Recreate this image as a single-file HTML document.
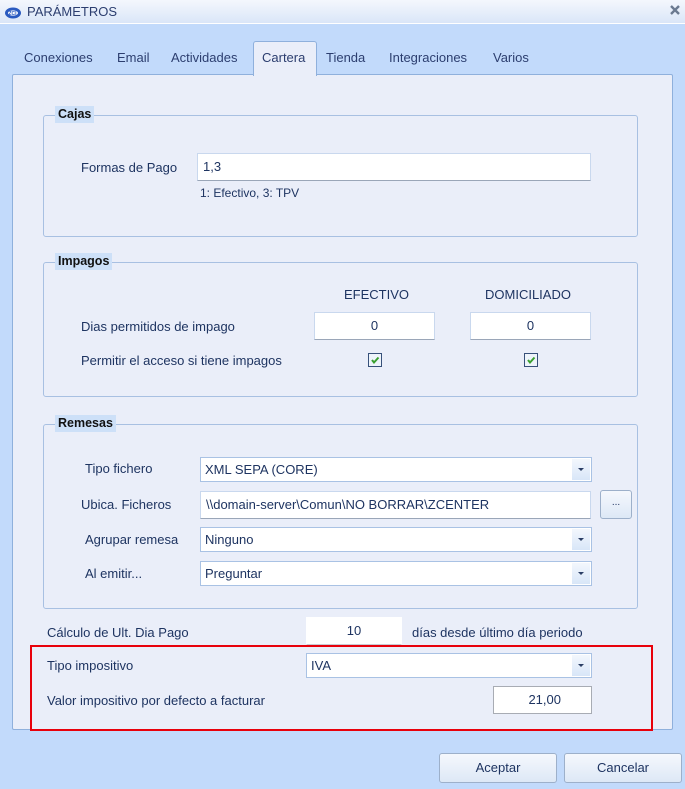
<!DOCTYPE html>
<html><head><meta charset="utf-8"><style>
*{margin:0;padding:0;box-sizing:border-box}
body{width:685px;height:789px;overflow:hidden;background:#c2dafb;font-family:"Liberation Sans",sans-serif;font-size:13px;color:#1e3461;position:relative}
.a{position:absolute;white-space:nowrap}
.title{left:0;top:0;width:685px;height:24px;background:linear-gradient(#f4f7fd,#dae6f8);border-bottom:1px solid #fff}
.panel{left:12px;top:74px;width:661px;height:656px;background:#eaeef9;border:1px solid #8fb0dc;border-radius:2px}
.gb{border:1px solid #a8c0e2;border-radius:3px}
.gt{font-weight:bold;color:#111;background:#cde0f8;padding:1px 3px 2px 3px;font-size:12.5px}
.in{background:#fff;border:1px solid #c9d8ee;border-bottom:1px solid #9aa6b8;height:28px;line-height:26px;padding-left:5px}
.cb{background:#fff;border:1px solid #a9c2e4;height:25px;line-height:23px;padding-left:4px}
.cb i{position:absolute;right:1px;top:1px;width:18px;height:21px;background:linear-gradient(#f3f7fd,#d8e6f8)}
.cb i:after{content:"";position:absolute;left:6px;top:9px;border-left:3px solid transparent;border-right:3px solid transparent;border-top:3px solid #2b3f66}
.chk{width:14px;height:14px;border:1px solid #37507a;background:#eef4fb}
.btn{border:1px solid #9db0ca;border-radius:3px;background:linear-gradient(#f5f8fd,#dde8f6);text-align:center;line-height:28px;height:30px}
</style></head><body>
<div class="a title"></div>
<svg class="a" style="left:4px;top:4px" width="18" height="16" viewBox="0 0 18 16"><ellipse cx="9" cy="9" rx="8" ry="5.5" fill="#2a5ac0"/><ellipse cx="9" cy="9" rx="5" ry="2.6" fill="#fff"/><text x="4.5" y="11" font-size="5" fill="#2a5ac0" font-family="Liberation Sans" font-weight="bold">ZCI</text></svg>
<div class="a" style="left:27px;top:4px;color:#2c3e6f;font-size:13px">PARÁMETROS</div>
<svg class="a" style="left:669px;top:4px" width="12" height="12"><path d="M2 2L10 10M10 2L2 10" stroke="#6b7a90" stroke-width="2.4"/></svg>

<div class="a" style="left:253px;top:41px;width:64px;height:35px;background:#eaeef9;border:1px solid #8fb0dc;border-bottom:none;border-radius:3px 3px 0 0;z-index:2"></div>
<div class="a panel"></div>
<div class="a" style="left:24px;top:50px;color:#2c3e6f">Conexiones</div>
<div class="a" style="left:117px;top:50px;color:#2c3e6f">Email</div>
<div class="a" style="left:171px;top:50px;color:#2c3e6f">Actividades</div>
<div class="a" style="left:262px;top:50px;color:#2c3e6f;z-index:3">Cartera</div>
<div class="a" style="left:326px;top:50px;color:#2c3e6f">Tienda</div>
<div class="a" style="left:389px;top:50px;color:#2c3e6f">Integraciones</div>
<div class="a" style="left:493px;top:50px;color:#2c3e6f">Varios</div>

<div class="a gb" style="left:43px;top:115px;width:595px;height:122px"></div>
<div class="a gt" style="left:55px;top:106px">Cajas</div>
<div class="a" style="left:81px;top:160px">Formas de Pago</div>
<div class="a in" style="left:197px;top:153px;width:394px">1,3</div>
<div class="a" style="left:200px;top:186px;font-size:12px">1: Efectivo, 3: TPV</div>

<div class="a gb" style="left:43px;top:262px;width:595px;height:135px"></div>
<div class="a gt" style="left:55px;top:253px">Impagos</div>
<div class="a" style="left:344px;top:287px">EFECTIVO</div>
<div class="a" style="left:485px;top:287px">DOMICILIADO</div>
<div class="a" style="left:81px;top:319px">Dias permitidos de impago</div>
<div class="a in" style="left:314px;top:312px;width:121px;text-align:center;padding:0">0</div>
<div class="a in" style="left:470px;top:312px;width:121px;text-align:center;padding:0">0</div>
<div class="a" style="left:81px;top:353px">Permitir el acceso si tiene impagos</div>
<div class="a chk" style="left:368px;top:353px"><svg width="12" height="12" style="position:absolute;left:0;top:0"><path d="M3 6 L5 8.5 L9.5 3.5" stroke="#3aa030" stroke-width="2" fill="none"/></svg></div>
<div class="a chk" style="left:524px;top:353px"><svg width="12" height="12" style="position:absolute;left:0;top:0"><path d="M3 6 L5 8.5 L9.5 3.5" stroke="#3aa030" stroke-width="2" fill="none"/></svg></div>

<div class="a gb" style="left:43px;top:424px;width:595px;height:185px"></div>
<div class="a gt" style="left:55px;top:415px">Remesas</div>
<div class="a" style="left:85px;top:461px">Tipo fichero</div>
<div class="a cb" style="left:200px;top:457px;width:392px">XML SEPA (CORE)<i></i></div>
<div class="a" style="left:81px;top:497px">Ubica. Ficheros</div>
<div class="a in" style="left:200px;top:491px;width:391px;height:28px">\\domain-server\Comun\NO BORRAR\ZCENTER</div>
<div class="a btn" style="left:600px;top:490px;width:32px;height:29px;line-height:24px;font-size:10px">...</div>
<div class="a" style="left:85px;top:532px">Agrupar remesa</div>
<div class="a cb" style="left:200px;top:527px;width:392px">Ninguno<i></i></div>
<div class="a" style="left:85px;top:566px">Al emitir...</div>
<div class="a cb" style="left:200px;top:561px;width:392px">Preguntar<i></i></div>

<div class="a" style="left:47px;top:625px">Cálculo de Ult. Dia Pago</div>
<div class="a in" style="left:306px;top:617px;width:96px;text-align:center;padding:0;border-color:#fff;border-bottom-color:#c8ccd4">10</div>
<div class="a" style="left:412px;top:625px">días desde último día periodo</div>

<div class="a" style="left:30px;top:645px;width:623px;height:86px;border:2px solid #e8000b"></div>
<div class="a" style="left:47px;top:658px">Tipo impositivo</div>
<div class="a cb" style="left:306px;top:653px;width:286px">IVA<i></i></div>
<div class="a" style="left:47px;top:693px">Valor impositivo por defecto a facturar</div>
<div class="a in" style="left:493px;top:686px;width:99px;text-align:right;padding-right:30px;border:1px solid #a8acb4">21,00</div>

<div class="a btn" style="left:439px;top:753px;width:118px">Aceptar</div>
<div class="a btn" style="left:564px;top:753px;width:118px">Cancelar</div>
</body></html>
